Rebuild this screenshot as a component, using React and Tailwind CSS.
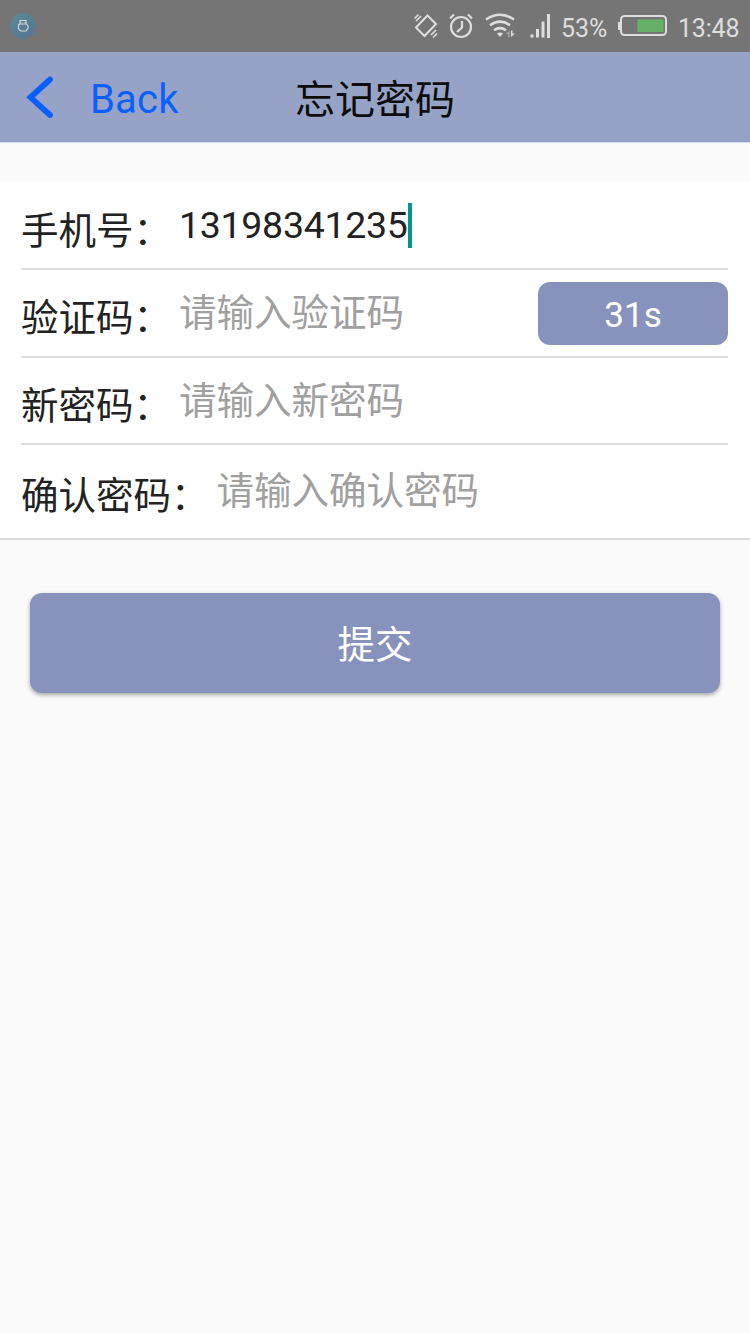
import clsx from "clsx";

const fields = [
  { id: "phone", label: "手机号：", value: "13198341235", height: "h-[88px]", pad: "pt-[11px]" },
  { id: "code", label: "验证码：", placeholder: "请输入验证码", height: "h-[88px]", pad: "pt-[10px]", countdown: "31s" },
  { id: "password", label: "新密码：", placeholder: "请输入新密码", height: "h-[87px]", pad: "pt-[10px]" },
  { id: "confirm", label: "确认密码：", placeholder: "请输入确认密码", height: "h-[93px] pb-[2px]", pad: "pt-[11px]" },
];

function StatusIcons() {
  return (
    <svg width="140" height="52" viewBox="412 0 140 52" fill="none" stroke="#dedede" strokeWidth="2">
      {/* vibrate */}
      <path d="M427.5 15.5 L436 24 L424.5 36 L416 27.5 Z" />
      <path d="M414.5 18.5 L418.5 14.5 M416 21 L421 16 M431 35 L436 30 M433 37.5 L437 33.5" strokeWidth="1.7" />
      {/* alarm */}
      <circle cx="461" cy="27" r="10" strokeWidth="2.2" />
      <path d="M462 21 V27.5 L457 32 M450 18.5 L454 14.5 M468 14.5 L472 18.5" strokeWidth="2.2" />
      {/* wifi */}
      <path d="M486 19.5 Q500 10 514 19.5" strokeWidth="2.5" />
      <path d="M490 25.3 Q500 18 510 25.3" strokeWidth="2.5" />
      <path d="M494 30.3 Q500 26 506 30.3" strokeWidth="2.5" />
      <path d="M497 33.5 Q500 31.5 503 33.5 L500 37 Z" fill="#dedede" stroke="none" />
      <path d="M506 34 L509.5 30.5 V37 H508 V34 Z" fill="#aaa" stroke="none" />
      <path d="M511 30.5 H512.5 V33.5 H515 L511 37 Z" fill="#dedede" stroke="none" />
      {/* signal */}
      <path d="M530.5 34.5 H533.5 V37.5 H530.5 Z M536 29 H539 V37.5 H536 Z M541.5 21.5 H544.5 V37.5 H541.5 Z M547 14 H550 V38 H547 Z" fill="#dedede" stroke="none" />
    </svg>
  );
}

function StatusBar() {
  return (
    <div className="flex h-[52px] items-center bg-[#757575] px-2.5 text-[25px] text-[#dedede]">
      <svg width="26" height="26" viewBox="0 0 26 26">
        <defs>
          <linearGradient id="usb" x1="0" y1="0" x2="0.6" y2="1">
            <stop offset="0" stopColor="#568c93" />
            <stop offset="1" stopColor="#587696" />
          </linearGradient>
        </defs>
        <circle cx="13" cy="12.7" r="12.7" fill="url(#usb)" />
        <path d="M10 11 V7.5 H16 V11 M9.5 11 H16.5 L18 13 V15 L16 18 H10.5 L8.5 15.5 V12 Z M12 9.5 V10 M14.5 9.5 V10" fill="none" stroke="#d0d8dc" strokeWidth="1.2" />
      </svg>
      <div className="ml-auto flex h-[52px] items-center">
        <StatusIcons />
        <span className="ml-[9px] w-[47px] whitespace-nowrap pt-[5px]">53%</span>
        <svg className="ml-[9px]" width="50" height="52" viewBox="617 0 50 52">
          <path d="M618 22 H620 V30 H618 Z" fill="#dedede" />
          <rect x="621" y="16" width="45" height="19" rx="3.5" fill="none" stroke="#dedede" strokeWidth="2" />
          <rect x="637.5" y="19.5" width="26" height="12.5" fill="#66b168" />
        </svg>
        <span className="ml-[11px] w-[62px] whitespace-nowrap pt-[5px] tracking-[-0.2px]">13:48</span>
      </div>
    </div>
  );
}

function Header() {
  return (
    <header className="grid h-[91px] grid-cols-[1fr_auto_1fr] items-center border-b border-[#d5d9e6] bg-[#97a3c6]">
      <div className="flex items-center text-[#0a60ff]">
        <svg className="ml-[26px]" width="28" height="42" viewBox="26 76 28 42" fill="none">
          <path d="M50 79.5 L30.5 97.3 L50 115" stroke="#0a60ff" strokeWidth="5.8" strokeLinecap="round" />
        </svg>
        <span className="ml-[36px] pt-[5px] text-[40px] leading-[48px] tracking-[0.2px]">Back</span>
      </div>
      <h1 className="pt-[7px] text-[40px] leading-[60px] text-[#0c0c0c]">忘记密码</h1>
    </header>
  );
}

function Field({ field, last }) {
  return (
    <div className={clsx("flex items-center", field.height, !last && "border-b-2 border-[#dcdcdc]")}>
      <label className={clsx("whitespace-nowrap text-[37.5px] leading-[56px] text-[#222]", field.pad)}>{field.label}</label>
      <div className="ml-2 flex flex-1 items-center">
        {field.value ? (
          <>
            <span className="text-[37.5px] leading-[44px] tracking-[-0.3px] text-[#222]">{field.value}</span>
            <span className="h-[45px] w-1 bg-[#009688]" />
          </>
        ) : (
          <span className="whitespace-nowrap text-[37.5px] leading-[56px] text-[#a0a0a0]">{field.placeholder}</span>
        )}
      </div>
      {field.countdown && (
        <button className="h-[63px] w-[190px] rounded-xl bg-[#8793bd] pt-[5px] text-[35px] leading-[50px] text-white">
          {field.countdown}
        </button>
      )}
    </div>
  );
}

export default function App() {
  return (
    <div lang="zh-CN" className="min-h-[1333px] w-[750px] bg-[#fafafa] font-[Roboto,'Noto_Sans_CJK_SC',sans-serif]">
      <StatusBar />
      <Header />
      <main>
        <form className="mt-[39px] border-b-2 border-[#dcdcdc] bg-white pl-[21px] pr-[22px]">
          {fields.map((field, i) => (
            <Field key={field.id} field={field} last={i === fields.length - 1} />
          ))}
        </form>
        <div className="px-[30px] pt-[53px]">
          <button className="h-[100px] w-full rounded-xl bg-[#8793bd] pt-1 text-[37.5px] text-white shadow-[0_2px_4px_rgba(0,0,0,0.35)]">
            提交
          </button>
        </div>
      </main>
    </div>
  );
}
